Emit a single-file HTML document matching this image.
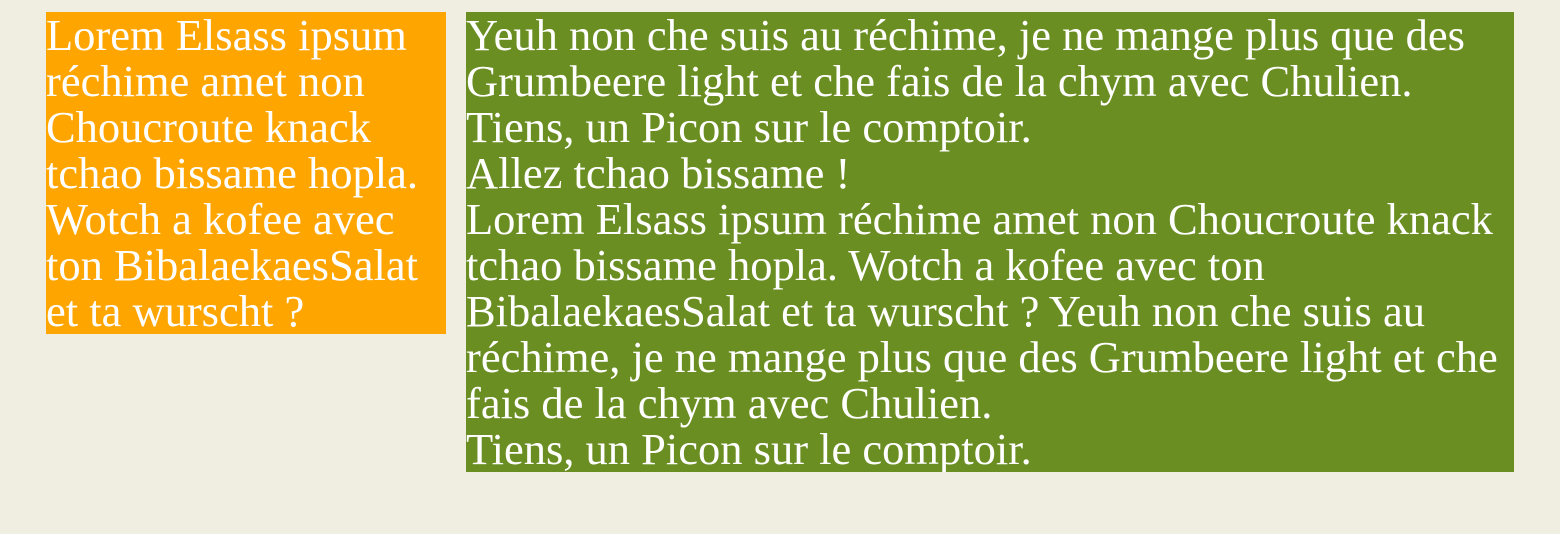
<!DOCTYPE html>
<html><head><meta charset="utf-8"><style>
html,body{margin:0;padding:0;background:#f0ede1;width:1560px;height:534px;overflow:hidden}
.b{position:absolute;top:12px;color:#fff;font-family:"Liberation Serif",serif;font-size:44.5px;line-height:46px;white-space:nowrap;overflow:hidden}
.o{left:46px;width:400px;height:322px;background:#ffa500}
.g{left:466px;width:1048px;height:460px;background:#6b8e23}
</style></head><body>
<div class="b o">Lorem Elsass ipsum<br>réchime amet non<br>Choucroute knack<br>tchao bissame hopla.<br>Wotch a kofee avec<br>ton BibalaekaesSalat<br>et ta wurscht ?</div>
<div class="b g">Yeuh non che suis au réchime, je ne mange plus que des<br>Grumbeere light et che fais de la chym avec Chulien.<br>Tiens, un Picon sur le comptoir.<br>Allez tchao bissame !<br>Lorem Elsass ipsum réchime amet non Choucroute knack<br>tchao bissame hopla. Wotch a kofee avec ton<br>BibalaekaesSalat et ta wurscht ? Yeuh non che suis au<br>réchime, je ne mange plus que des Grumbeere light et che<br>fais de la chym avec Chulien.<br>Tiens, un Picon sur le comptoir.</div>
</body></html>
